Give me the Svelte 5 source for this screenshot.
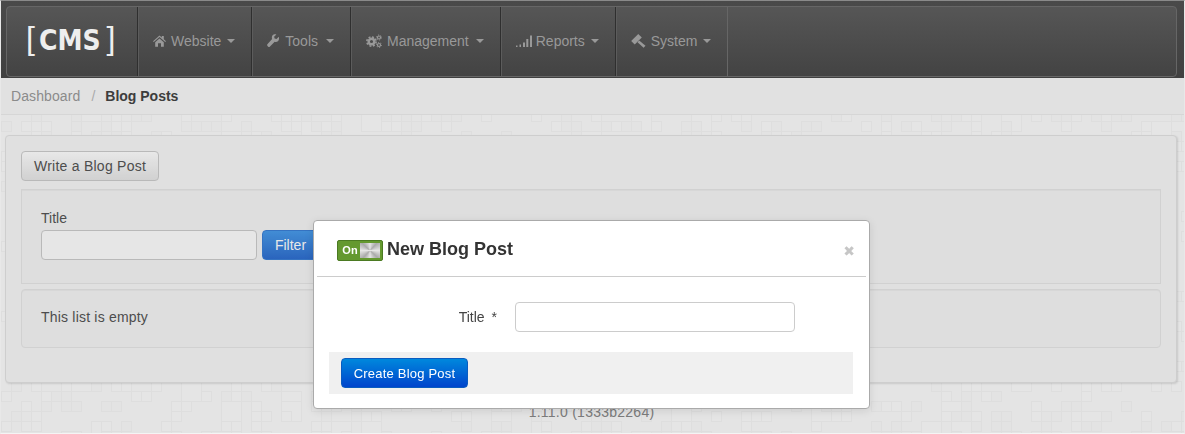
<script>
  const navItems = [
    { label: 'Website', icon: 'home', w: 13, gap: 5, caret: 6 },
    { label: 'Tools', icon: 'wrench', w: 12, gap: 6, caret: 8 },
    { label: 'Management', icon: 'cogs', w: 16, gap: 5, caret: 7 },
    { label: 'Reports', icon: 'signal', w: 16, gap: 4, caret: 6 },
    { label: 'System', icon: 'legal', w: 15, gap: 5, caret: 6 }
  ];

  // pseudo random tiles for the page background
  let seed = 7;
  function rnd() {
    seed = (seed * 16807) % 2147483647;
    return seed / 2147483647;
  }
  const tiles = [];
  for (let y = 0; y < 434; y += 10) {
    for (let x = 0; x < 1185; x += 10) {
      const r = rnd();
      if (r < 0.16) tiles.push({ x, y, s: 10, f: '#fcfcfc' });
      else if (r < 0.3) tiles.push({ x, y, s: 10, f: '#fafafa' });
      else if (r < 0.33) tiles.push({ x, y, s: 20, f: '#fcfcfc' });
    }
  }
</script>

<div class="page">
  <svg class="tiles" width="1185" height="434" aria-hidden="true">
    {#each tiles as t}
      <rect x={t.x + 0.5} y={t.y + 0.5} width={t.s} height={t.s} fill={t.f} stroke="#f5f5f5" />
    {/each}
  </svg>

  <header class="navbar">
    <div class="navbar-inner">
      <a class="brand" href="#top"><span class="br">[</span><b>CMS</b><span class="br">]</span></a>
      <ul class="nav">
        {#each navItems as item}
          <li>
            <svg class="icon" style="margin-right: {item.gap}px" width={item.w} height="14" viewBox="0 0 {item.w} 14" aria-hidden="true">
              {#if item.icon === 'home'}
                <path d="M0 7.200 6.500 1.400 8.800 3.400V2h2v3.200L13 7.200l-.8.900L6.500 3 .8 8.100zM2.200 8.300 6.500 4.400l4.300 3.900V12.800H8V9.300H5V12.800H2.200z" />
              {:else if item.icon === 'wrench'}
                <path d="M11.800 2.800 9.500 5 7.600 4.600 7.100 2.700 9.400.4C7.900 0 6.200.3 5.400 1.600 4.700 2.700 4.700 3.900 5.100 4.900L.6 9.900a1.400 1.400 0 0 0 0 2l.4.500a1.400 1.400 0 0 0 2 0L7.700 7.700C8.800 8.100 10 8 10.900 7.200 12 6.300 12.300 4.300 11.800 2.800z" />
              {:else if item.icon === 'cogs'}
                <g class="gear">
                  <circle cx="5.500" cy="7.500" r="2.800" stroke-width="2.400" />
                  <circle cx="5.500" cy="7.500" r="4.600" stroke-width="1.600" stroke-dasharray="2 1.610" />
                  <circle cx="13" cy="3.500" r="1.500" stroke-width="1.200" />
                  <circle cx="13" cy="3.500" r="2.500" stroke-width="1" stroke-dasharray="1.100 1.520" />
                  <circle cx="13" cy="11" r="1.500" stroke-width="1.200" />
                  <circle cx="13" cy="11" r="2.500" stroke-width="1" stroke-dasharray="1.100 1.520" />
                </g>
              {:else if item.icon === 'signal'}
                <path d="M0 11.500h1.500V13H0zM3.500 10.500H5V13H3.500zM7 8.500h2V13H7zM10.300 5h2V13h-2zM14 1.500h2V13h-2z" />
              {:else}
                <rect x="0.500" y="2.800" width="10" height="5" transform="rotate(-45 5.500 5.300)" />
                <path d="M6.500 8.200 8.200 6.500 14.500 11.800 12.600 13.800z" />
              {/if}
            </svg>
            <span>{item.label}</span>
            <i class="caret" style="margin-left: {item.caret}px"></i>
          </li>
        {/each}
      </ul>
    </div>
  </header>

  <nav class="breadcrumb">
    <a href="#top">Dashboard</a>
    <span class="sep">/</span>
    <strong>Blog Posts</strong>
  </nav>

  <main class="content">
    <section class="card">
      <button class="btn">Write a Blog Post</button>
      <form class="well filter">
        <label for="flt">Title</label>
        <div class="row">
          <input id="flt" type="text" />
          <button type="button" class="btn-filter">Filter</button>
        </div>
      </form>
      <div class="well empty">This list is empty</div>
    </section>
  </main>

  <footer class="version">1.11.0 (1333b2264)</footer>
  <div class="backdrop"></div>
</div>

<div class="modal">
  <div class="modal-header">
    <span class="toggle"><span class="on">On</span><span class="knob"></span></span>
    <h3>New Blog Post</h3>
    <span class="close">✖</span>
  </div>
  <div class="modal-body">
    <label for="ttl">Title *</label>
    <input id="ttl" type="text" />
  </div>
  <div class="actions">
    <button class="btn-create">Create Blog Post</button>
  </div>
</div>

<style>
  :global(body) {
    margin: 0;
    background: #f4f4f4;
    font-family: "Liberation Sans", Arial, sans-serif;
    font-size: 14px;
    color: #555;
    overflow: hidden;
  }

  .page {
    position: relative;
    box-sizing: border-box;
    height: 434px;
    overflow: hidden;
    background: #fbfbfb;
    border-top: 1px solid #8a8a8a;
    border-left: 1px solid #e8e8e8;
    border-right: 1px solid #e8e8e8;
    border-bottom: 1px solid #f4f4f4;
  }

  .tiles {
    position: absolute;
    top: 0;
    left: 0;
  }

  .navbar {
    position: relative;
    box-sizing: border-box;
    height: 77px;
    padding: 5px 7px 1px 5px;
    background: linear-gradient(#4a4a4a, #404040);
  }

  .navbar-inner {
    display: flex;
    height: 71px;
    border: 1px solid #666;
    border-radius: 4px;
    background: linear-gradient(#565656, #434343);
    box-sizing: border-box;
  }

  .brand {
    width: 130px;
    flex: none;
    display: flex;
    align-items: center;
    box-sizing: border-box;
    padding: 0 0 2px 19px;
    color: #eee;
    text-decoration: none;
    font-family: "DejaVu Sans", sans-serif;
    font-stretch: condensed;
    font-size: 28px;
  }

  .brand b {
    font-weight: 700;
    margin: 0 6px 0 4px;
  }

  .brand .br {
    font-family: "Liberation Sans", sans-serif;
    font-weight: 400;
    font-size: 32px;
    position: relative;
    top: -2px;
  }

  .nav {
    display: flex;
    list-style: none;
    margin: 0;
    padding: 0;
  }

  .nav li {
    display: flex;
    align-items: center;
    padding: 0 16px 2px 15px;
    color: #999;
    border-left: 1px solid #2f2f2f;
    box-shadow: inset 1px 0 0 #5c5c5c;
  }

  .nav li:last-child {
    border-right: 1px solid #666;
  }

  .icon {
    fill: #999;
    flex: none;
  }

  .gear {
    fill: none;
    stroke: #999;
  }

  .caret {
    width: 0;
    height: 0;
    border-top: 4px solid #999;
    border-left: 4px solid transparent;
    border-right: 4px solid transparent;
  }

  .breadcrumb {
    position: relative;
    display: flex;
    align-items: center;
    height: 37px;
    padding: 0 10px;
    box-sizing: border-box;
    background: #f8f8f8;
    border-bottom: 1px solid #ececec;
  }

  .breadcrumb a {
    color: #999;
    text-decoration: none;
    letter-spacing: 0.1px;
  }

  .sep {
    color: #bbb;
    margin: 0 10px 0 11px;
  }

  .breadcrumb strong {
    color: #444;
  }

  .content {
    position: relative;
    padding: 20px 7px 0 4px;
  }

  .card {
    height: 248px;
    box-sizing: border-box;
    padding: 15px;
    background: #f7f7f7;
    border: 1px solid #e3e3e3;
    border-radius: 4px;
    box-shadow: 1px 1px 2px rgba(0, 0, 0, 0.12);
  }

  .btn {
    display: block;
    height: 30px;
    width: 138px;
    padding: 0;
    font: 14px "Liberation Sans", Arial, sans-serif;
    letter-spacing: 0.25px;
    color: #555;
    background: linear-gradient(#fff, #e6e6e6);
    border: 1px solid #ccc;
    border-radius: 4px;
  }

  .well {
    box-sizing: border-box;
    padding: 0 19px;
    background: #f4f4f4;
    border: 1px solid #e6e6e6;
    box-shadow: inset 0 1px 1px rgba(0, 0, 0, 0.03);
  }

  .filter {
    height: 95px;
    margin-top: 8px;
    padding-top: 20px;
    border-radius: 0;
  }

  .filter label {
    display: block;
    line-height: 16px;
    margin-bottom: 4px;
  }

  .row {
    display: flex;
    gap: 5px;
  }

  .row input {
    box-sizing: border-box;
    width: 216px;
    height: 30px;
    background: #fdfdfd;
    border: 1px solid #ccc;
    border-radius: 4px;
  }

  .btn-filter {
    width: 57px;
    height: 30px;
    padding: 0;
    font: 14px "Liberation Sans", Arial, sans-serif;
    color: #fff;
    background: linear-gradient(#499bea, #2f6fd0);
    border: 1px solid #3b7fd6;
    border-radius: 4px;
  }

  .empty {
    height: 59px;
    margin-top: 5px;
    line-height: 55px;
    letter-spacing: 0.2px;
    border-radius: 4px;
  }

  .version {
    position: absolute;
    top: 403px;
    left: 0;
    width: 1181px;
    text-align: center;
    color: #888;
    letter-spacing: 0.25px;
  }

  .backdrop {
    position: absolute;
    top: 77px;
    left: 0;
    right: 0;
    bottom: 0;
    background: rgba(0, 0, 0, 0.09);
  }

  .modal {
    position: fixed;
    top: 220px;
    left: 313px;
    width: 557px;
    height: 189px;
    box-sizing: border-box;
    background: #fff;
    border: 1px solid #aaa;
    border-radius: 4px;
    box-shadow: 0 2px 8px rgba(0, 0, 0, 0.1);
  }

  .modal-header {
    display: flex;
    align-items: center;
    height: 55px;
    margin: 0 3px;
    padding-left: 20px;
    border-bottom: 1px solid #ccc;
    position: relative;
  }

  .modal-header h3 {
    margin: 2px 0 0 4px;
    font-size: 18px;
    font-weight: bold;
    color: #333;
  }

  .toggle {
    display: flex;
    align-items: center;
    box-sizing: border-box;
    width: 46px;
    height: 21px;
    margin-top: 3px;
    padding: 2px;
    background: #64992f;
    border: 1px solid #4b7a22;
    border-radius: 2px;
  }

  .on {
    width: 20px;
    text-align: center;
    font-size: 11px;
    font-weight: bold;
    color: #fff;
  }

  .knob {
    width: 20px;
    height: 15px;
    background: conic-gradient(#e6e6e6, #aaa 12%, #e6e6e6 25%, #aaa 37%, #e6e6e6 50%, #aaa 62%, #e6e6e6 75%, #aaa 87%, #e6e6e6);
  }

  .close {
    position: absolute;
    right: 11px;
    top: 20px;
    font-family: "DejaVu Sans", sans-serif;
    font-size: 14px;
    line-height: 20px;
    color: #c6c6c6;
  }

  .modal-body {
    display: flex;
    align-items: center;
    height: 75px;
    padding: 4px 74px 0 0;
    box-sizing: border-box;
    justify-content: flex-end;
  }

  .modal-body label {
    color: #444;
    margin-right: 18px;
    word-spacing: 3px;
  }

  .modal-body input {
    box-sizing: border-box;
    width: 280px;
    height: 30px;
    background: #fff;
    border: 1px solid #ccc;
    border-radius: 4px;
  }

  .actions {
    display: flex;
    align-items: center;
    height: 42px;
    margin: 0 16px 0 15px;
    padding-left: 12px;
    background: #f0f0f0;
  }

  .btn-create {
    width: 127px;
    height: 30px;
    padding: 0;
    font: 13px "Liberation Sans", Arial, sans-serif;
    letter-spacing: 0.2px;
    color: #fff;
    background: linear-gradient(#0088dd, #0044cc);
    border: 1px solid #0a5cc0;
    border-radius: 4px;
  }
</style>
